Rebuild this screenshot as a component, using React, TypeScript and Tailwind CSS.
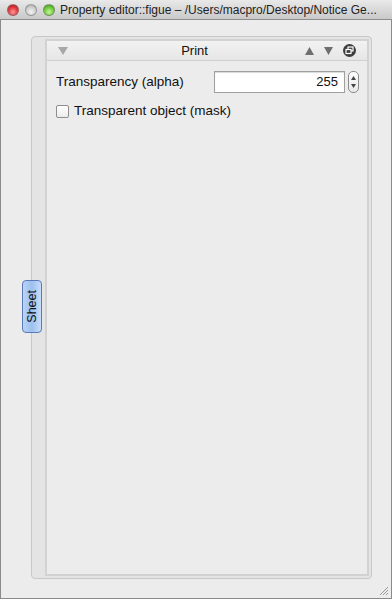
import React from 'react';

const font = { fontFamily: '"Liberation Sans", Arial, sans-serif' };

function TrafficLight({ color }: { color: 'red' | 'grey' | 'green' }) {
  const fills = {
    red: 'bg-[radial-gradient(circle_at_50%_70%,#ff9a9a,#e0353a_55%,#a51a1f)]',
    grey: 'bg-[radial-gradient(circle_at_50%_70%,#f4f4f4,#cfcfcf_55%,#9e9e9e)]',
    green: 'bg-[radial-gradient(circle_at_50%_70%,#c6f59a,#6ccb3a_55%,#3a8a1a)]',
  };
  return <div className={`h-[12px] w-[12px] rounded-full border border-[#7a7a7a]/60 ${fills[color]}`} />;
}

export default function App() {
  return (
    <div className="h-[599px] w-[392px] bg-[#ececec] flex flex-col overflow-hidden" style={font}>
      {/* Title bar */}
      <div className="h-[20px] shrink-0 flex items-center bg-gradient-to-b from-[#e9e9e9] to-[#c9c9c9] border-b border-[#8e8e8e]">
        <div className="flex items-center gap-[6px] pl-[7px]">
          <TrafficLight color="red" />
          <TrafficLight color="grey" />
          <TrafficLight color="green" />
        </div>
        <div className="ml-[5px] text-[12px] text-[#222] whitespace-nowrap">
          Property editor::figue – /Users/macpro/Desktop/Notice Ge...
        </div>
      </div>

      {/* Window body */}
      <div className="relative flex-1 border-l border-r border-b border-[#8a8a8a] pl-[30px] pr-[19px] pt-[16px] pb-[19px]">
        <div className="h-full flex border border-[#c8c8c8] rounded-[4px] bg-[#e4e4e4] pt-[2px] pr-[2px] pb-[2px]">
          <div className="w-[13px] shrink-0" />
          <div className="flex-1 flex flex-col border-2 border-[#d2d2d2] bg-[#ececec]">
            {/* Header */}
            <div className="h-[20px] shrink-0 flex items-center border-b border-[#cfcfcf] bg-gradient-to-b from-[#f2f2f2] to-[#e6e6e6] px-[11px]">
              <svg width="10" height="8" viewBox="0 0 10 8"><path d="M0 0 H10 L5 8 Z" fill="#a8a8a8" /></svg>
              <div className="flex-1 text-center text-[13px] text-[#111] pl-[16px]">Print</div>
              <div className="flex items-center gap-[10px]">
                <svg width="9" height="8" viewBox="0 0 9 8"><path d="M4.5 0 L9 8 H0 Z" fill="#6f6f6f" /></svg>
                <svg width="9" height="8" viewBox="0 0 9 8"><path d="M0 0 H9 L4.5 8 Z" fill="#6f6f6f" /></svg>
                <svg width="13" height="13" viewBox="0 0 13 13">
                  <circle cx="6.5" cy="6.5" r="6.5" fill="#3d3d3d" />
                  <rect x="5" y="3" width="5" height="4" fill="none" stroke="#fff" strokeWidth="1.2" />
                  <rect x="3" y="5.5" width="5" height="4" fill="#3d3d3d" stroke="#fff" strokeWidth="1.2" />
                </svg>
              </div>
            </div>

            {/* Content */}
            <div className="flex-1 pl-[9px] pr-[8px] pt-[10px]">
              <div className="flex items-center h-[22px]">
                <span className="text-[13.5px] text-[#111]">Transparency (alpha)</span>
                <div className="ml-auto flex items-center gap-[3px]">
                  <div className="w-[131px] h-[22px] bg-white border border-[#9f9f9f] shadow-[inset_0_1px_1px_rgba(0,0,0,0.15)] flex items-center justify-end pr-[6px] text-[13px] text-[#111]">
                    255
                  </div>
                  <div className="w-[11px] h-[22px] rounded-[5px] border border-[#8c8c8c] bg-gradient-to-b from-[#fdfdfd] to-[#e8e8e8] flex flex-col items-center justify-center gap-[4px]">
                    <svg width="5" height="4" viewBox="0 0 5 4"><path d="M2.5 0 L5 4 H0 Z" fill="#444" /></svg>
                    <svg width="5" height="4" viewBox="0 0 5 4"><path d="M0 0 H5 L2.5 4 Z" fill="#444" /></svg>
                  </div>
                </div>
              </div>
              <div className="flex items-center mt-[8px] gap-[5px]">
                <div className="w-[13px] h-[13px] rounded-[2px] border border-[#8e8e8e] bg-gradient-to-b from-white to-[#ececec]" />
                <span className="text-[13.5px] text-[#111]">Transparent object (mask)</span>
              </div>
            </div>
          </div>
        </div>

        {/* Sheet tab */}
        <div className="absolute left-[21px] top-[260px] w-[20px] h-[53px] rounded-[4px] border border-[#5a79b8] bg-gradient-to-r from-[#b9d4f7] via-[#9cc0ef] to-[#c9ddf8] flex items-center justify-center">
          <span className="-rotate-90 text-[12.5px] text-[#111] whitespace-nowrap">Sheet</span>
        </div>

        {/* resize grip */}
        <svg className="absolute right-[2px] bottom-[2px]" width="11" height="11" viewBox="0 0 11 11">
          <path d="M10 2 L2 10 M10 5 L5 10 M10 8 L8 10" stroke="#9a9a9a" strokeWidth="1" />
        </svg>
      </div>
    </div>
  );
}
